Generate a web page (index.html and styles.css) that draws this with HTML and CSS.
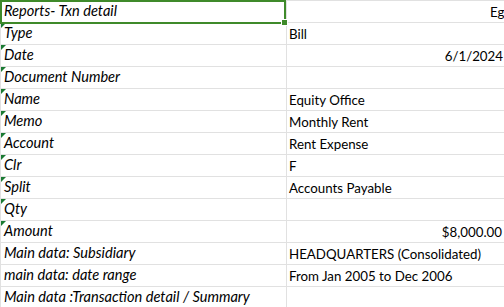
FILE: index.html
```html
<!DOCTYPE html>
<html>
<head>
<meta charset="utf-8">
<link rel="stylesheet" href="styles.css">
</head>
<body>
<div class="sheet">
  <div class="cell a sel">Reports- Txn detail<span class="selbox"><span class="handle"></span></span></div>
  <div class="cell b"><span class="eg">Eg</span></div>

  <div class="cell a err">Type</div>
  <div class="cell b">Bill</div>

  <div class="cell a err">Date</div>
  <div class="cell b num">6/1/2024</div>

  <div class="cell a err">Document Number</div>
  <div class="cell b"></div>

  <div class="cell a err">Name</div>
  <div class="cell b">Equity Office</div>

  <div class="cell a err">Memo</div>
  <div class="cell b">Monthly Rent</div>

  <div class="cell a err">Account</div>
  <div class="cell b">Rent Expense</div>

  <div class="cell a err">Clr</div>
  <div class="cell b">F</div>

  <div class="cell a err">Split</div>
  <div class="cell b">Accounts Payable</div>

  <div class="cell a err">Qty</div>
  <div class="cell b"></div>

  <div class="cell a err">Amount</div>
  <div class="cell b num cur">$8,000.00</div>

  <div class="cell a">Main data: Subsidiary</div>
  <div class="cell b">HEADQUARTERS (Consolidated)</div>

  <div class="cell a">main data: date range</div>
  <div class="cell b">From Jan 2005 to Dec 2006</div>

  <div class="cell a">Main data :Transaction detail / Summary</div>
  <div class="cell b"></div>
</div>
</body>
</html>
```

FILE: styles.css
```css
html, body {
  margin: 0;
  padding: 0;
  background: #ffffff;
  overflow: hidden;
}

.sheet {
  display: grid;
  grid-template-columns: 286px 218px;
  grid-auto-rows: 22px;
  font-family: Lato, "Open Sans", sans-serif;
  font-size: 13.3px;
  color: #000000;
}

.cell {
  position: relative;
  box-sizing: border-box;
  height: 22px;
  border-top: 1px solid #e1e1e1;
  border-left: 1px solid #e1e1e1;
  display: flex;
  align-items: flex-end;
  line-height: 16px;
  padding: 0 3px 2px 3px;
  white-space: nowrap;
}

.cell.a {
  font-style: italic;
  font-size: 14.6px;
  padding-bottom: 3px;
}

.cell.b {
  padding-left: 2px;
}

.cell.num {
  justify-content: flex-end;
  padding-right: 1px;
}

.cell.cur {
  padding-right: 2px;
}

.eg {
  margin-left: 201px;
}

.err::before {
  content: "";
  position: absolute;
  left: 0;
  top: 0;
  width: 0;
  height: 0;
  border-top: 5px solid #1a7a32;
  border-right: 5px solid transparent;
}

.selbox {
  position: absolute;
  left: -1px;
  top: -1px;
  width: 286px;
  height: 24px;
  box-sizing: border-box;
  border: 2px solid #3f8a2a;
  z-index: 2;
}

.handle {
  position: absolute;
  right: -4px;
  bottom: -4px;
  width: 5px;
  height: 5px;
  background: #3f8a2a;
  border: 1px solid #ffffff;
}
```
